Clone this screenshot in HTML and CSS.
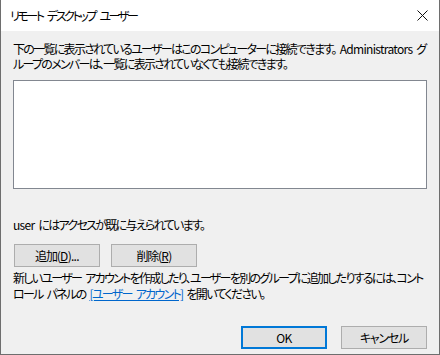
FILE: index.html
```html
<!DOCTYPE html>
<html lang="ja">
<head>
  <meta charset="UTF-8">
  <title>リモート デスクトップ ユーザー</title>
  <link rel="stylesheet" href="styles.css">
</head>
<body>
  <div class="dialog">
    <div class="titlebar">
      <span class="title">リモート デスクトップ ユーザー</span>
      <svg class="close" width="11" height="11" viewBox="0 0 11 11">
        <path d="M0.5 0.5 L10.5 10.5 M10.5 0.5 L0.5 10.5" stroke="#111" stroke-width="1" fill="none"/>
      </svg>
    </div>

    <div class="content">
      <p class="desc">下の一覧に表示されているユーザーはこのコンピューターに接続できます。 <span class="en">Administrators</span> グ<br>ループのメンバーは、一覧に表示されていなくても接続できます。</p>

      <div class="userlist"></div>

      <p class="access"><span class="en">user</span> にはアクセスが既に与えられています。</p>

      <div class="row">
        <button class="btn">追加<span class="en">(<u>D</u>)...</span></button>
        <button class="btn">削除<span class="en">(<u>R</u>)</span></button>
      </div>

      <p class="note">新しいユーザー アカウントを作成したり、ユーザーを別のグループに追加したりするには、コント<br>ロール パネルの <a href="#">[ユーザー アカウント]</a> を開いてください。</p>

      <div class="footer">
        <button class="btn default"><span class="en">OK</span></button>
        <button class="btn">キャンセル</button>
      </div>
    </div>
  </div>
</body>
</html>
```

FILE: styles.css
```css
body {
  margin: 0;
  background: #f0f0f0;
  font-family: "Noto Sans CJK JP", sans-serif;
  font-size: 12px;
  color: #000;
}
.dialog {
  width: 438px;
  height: 354px;
  border: 1px solid #6e6e6e;
  border-top: none;
  background: #f0f0f0;
}
.titlebar {
  height: 31px;
  background: #fff;
  display: flex;
  align-items: center;
  justify-content: space-between;
  padding: 0 11px 0 9px;
}
.title {
  font-feature-settings: "palt";
  letter-spacing: -2.4px;
  word-spacing: 4px;
  white-space: nowrap;
}
.close {
  display: block;
}
.content {
  padding: 10px 12px 0 12px;
  font-feature-settings: "palt";
  letter-spacing: -1.7px;
  word-spacing: 3px;
  white-space: nowrap;
}
.en {
  letter-spacing: -0.7px;
}
p {
  margin: 0;
}
.desc {
  line-height: 15px;
}
.userlist {
  margin-top: 9px;
  height: 107px;
  background: #fff;
  border: 1px solid #828790;
}
.access {
  margin-top: 28px;
  line-height: 15px;
}
.row {
  display: flex;
  gap: 11px;
  margin: 12px 0 0 1px;
}
.btn {
  width: 86px;
  height: 23px;
  padding: 0;
  background: #e1e1e1;
  border: 1px solid #adadad;
  font-family: inherit;
  font-size: 12px;
  font-feature-settings: "palt";
  letter-spacing: -1.2px;
  color: #000;
}
.btn.default {
  border: 2px solid #0078d7;
}
.note {
  margin-top: 3px;
  line-height: 16px;
}
.note a {
  color: #0066cc;
}
.footer {
  display: flex;
  justify-content: flex-end;
  gap: 14px;
  margin-top: 24px;
}
```
